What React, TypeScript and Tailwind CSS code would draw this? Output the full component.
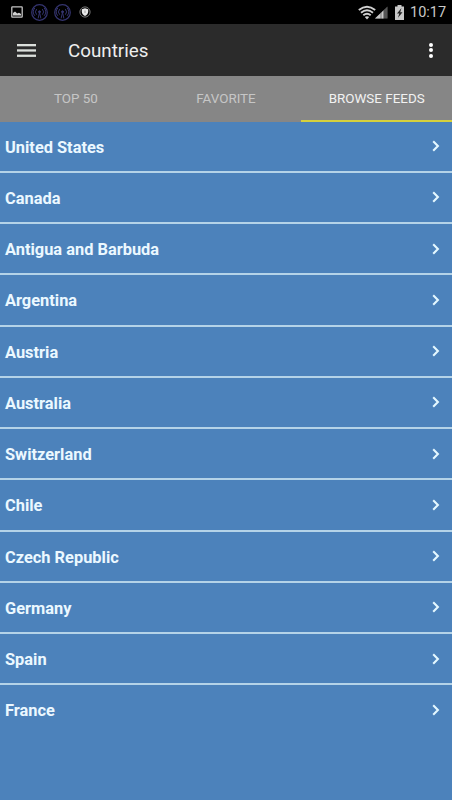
const countries = [
  'United States', 'Canada', 'Antigua and Barbuda', 'Argentina', 'Austria', 'Australia',
  'Switzerland', 'Chile', 'Czech Republic', 'Germany', 'Spain', 'France',
];

function PictureIcon() {
  return (
    <svg className="mr-[7px] h-3 w-3" viewBox="0 0 12 12">
      <rect x="0.8" y="0.8" width="10.4" height="10.4" rx="0.6" fill="none" stroke="#c4c4c4" strokeWidth="1.3" />
      <path d="M2 9.6V7l2-1.500 2.200 2L8 6.700l2 1.300v1.600z" fill="#d0d0d0" />
    </svg>
  );
}

function PodcastIcon() {
  return (
    <svg className="mr-[6px] h-[17px] w-[17px]" viewBox="0 0 17 17" fill="none" stroke="#34346f" strokeLinecap="round">
      <circle cx="8.5" cy="8.5" r="7.8" strokeWidth="1.2" />
      <path d="M5.4 10.400a3.700 3.700 0 0 1 0-5M11.600 10.400a3.700 3.700 0 0 0 0-5M3.600 11.500a5.500 5.500 0 0 1 0-7.200M13.400 11.500a5.500 5.500 0 0 0 0-7.200" strokeWidth="1" />
      <circle cx="8.5" cy="7.8" r="1" fill="#34346f" />
      <path d="M8.5 8.500 7.200 14M8.500 8.500l1.300 5.500" strokeWidth="1" />
    </svg>
  );
}

function ShieldIcon() {
  return (
    <svg className="h-3 w-3" viewBox="0 0 12 12">
      <circle cx="6" cy="6" r="5.1" fill="none" stroke="#777" strokeWidth="1" />
      <path d="M6 2.3 9.200 3.300v2.200C9.200 7.800 7.900 9.100 6 9.900 4.100 9.100 2.800 7.800 2.800 5.500V3.300z" fill="#e8e8e8" />
      <path d="M6 4.5v2.5" stroke="#888" strokeWidth="0.800" />
    </svg>
  );
}

function StatusIcons() {
  return (
    <>
      <svg className="h-[15px] w-[18px]" viewBox="0 0 18 15">
        <g fill="none" stroke="#d0d0d0" strokeWidth="1.900">
          <path d="M.8 5Q9-1.600 17.200 5" />
          <path d="M3 7.700Q9 2.600 15 7.700" />
          <path d="M5.300 10.300Q9 7 12.700 10.300" />
        </g>
        <path d="M6.800 12Q9 10.400 11.200 12L9 14.500z" fill="#d0d0d0" />
      </svg>
      <svg className="-ml-px h-[13px] w-[13px]" viewBox="0 0 13 13">
        <path d="M12.5 .5v12H0z" fill="#666" />
        <path d="M8.700 4.200v8.300H0z" fill="#c8c8c8" />
        <path d="M6 6v7M9 4v9M11 2v11" stroke="#242424" strokeWidth="0.5" />
      </svg>
      <svg className="ml-[6px] h-[15px] w-[11px]" viewBox="0 0 11 15">
        <path d="M3.5 0h4v1.5H10V15H1V1.5h2.5z" fill="#c8c8c8" />
        <path d="M7.500 3 3 8.500h2.300L4 12.700l4.500-5.500H6.200z" fill="#222" />
      </svg>
    </>
  );
}

function MenuIcon() {
  return (
    <svg className="h-[13px] w-[19px]" viewBox="0 0 19 13" fill="#dce0dc">
      <rect y="0" width="19" height="2.300" />
      <rect y="5.300" width="19" height="2.300" />
      <rect y="10.600" width="19" height="2.300" />
    </svg>
  );
}

function Chevron() {
  return (
    <svg className="h-3 w-2" viewBox="0 0 8 12" fill="none" stroke="#e4f8ff" strokeWidth="2.1">
      <path d="m1.200 1.300 4.700 4.700-4.700 4.700" />
    </svg>
  );
}

export default function App() {
  return (
    <div className="flex h-[800px] w-[452px] flex-col overflow-hidden bg-[#4c82bb] font-['Roboto',sans-serif]">
      <header className="flex h-6 shrink-0 items-center bg-black pl-[11px] pr-[6px]">
        <PictureIcon />
        <div className="ml-px flex">
          <PodcastIcon />
          <PodcastIcon />
        </div>
        <div className="ml-[2px] flex"><ShieldIcon /></div>
        <div className="ml-auto flex items-center">
          <StatusIcons />
          <span className="ml-[5px] w-[36px] whitespace-nowrap pt-[2px] text-[14.5px] leading-[22px] text-[#c9c9c9]">10:17</span>
        </div>
      </header>
      <div className="flex h-[52.25px] shrink-0 items-center bg-[#2b2b2b] pl-[17px] pr-[19px]">
        <button aria-label="Menu"><MenuIcon /></button>
        <h1 className="ml-8 pt-px text-[18.8px] leading-6 text-[#eeeeee]">Countries</h1>
        <button aria-label="More" className="ml-auto flex flex-col gap-[1.5px]">
          <span className="h-1 w-1 rounded-full bg-white" />
          <span className="h-1 w-1 rounded-full bg-white" />
          <span className="h-1 w-1 rounded-full bg-white" />
        </button>
      </div>
      <nav className="grid h-[45.25px] shrink-0 grid-cols-3 bg-[#868686] text-[13.4px]">
        <div className="flex items-center justify-center pl-px pt-px text-[#c6c6c6]">TOP 50</div>
        <div className="flex items-center justify-center pt-px text-[#c6c6c6]">FAVORITE</div>
        <div className="flex items-center justify-center border-b-2 border-[#d5d03c] pt-[3px] text-[#f2f2f2]">BROWSE FEEDS</div>
      </nav>
      <main className="h-[594.5px] shrink-0 overflow-hidden">
        {countries.map((name) => (
          <div key={name} className="flex h-[51.25px] items-center justify-between border-b-2 border-[#b4d3e8] pl-[5px] pr-[12px]">
            <span className="pt-[3px] text-[16.4px] font-bold leading-6 text-[#ebf8ff]">{name}</span>
            <Chevron />
          </div>
        ))}
      </main>
    </div>
  );
}
